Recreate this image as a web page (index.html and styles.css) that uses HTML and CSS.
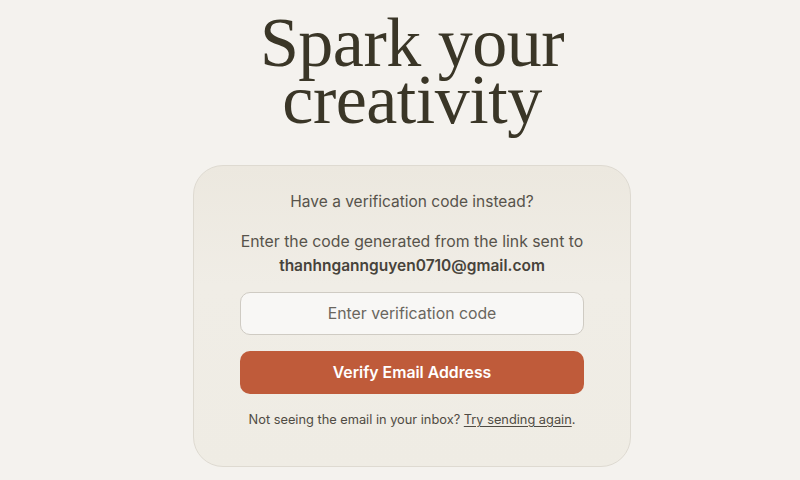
FILE: index.html
```html
<!DOCTYPE html>
<html>
<head>
<meta charset="utf-8">
<link rel="stylesheet" href="styles.css">
</head>
<body>
<main class="page">
  <h1 class="title"><span class="line">Spark your</span><span class="line">creativity</span></h1>
  <section class="card">
    <p class="lead">Have a verification code instead?</p>
    <p class="info">Enter the code generated from the link sent to<br><strong>thanhngannguyen0710@gmail.com</strong></p>
    <input class="code" type="text" placeholder="Enter verification code">
    <button class="verify">Verify Email Address</button>
    <p class="resend">Not seeing the email in your inbox? <a href="#">Try sending again</a>.</p>
  </section>
</main>
</body>
</html>
```
FILE: styles.css
```css
html, body {
  margin: 0;
  padding: 0;
  background: #f4f2ee;
}
body {
  width: 800px;
  height: 480px;
  overflow: hidden;
  font-family: Inter, "Noto Sans", sans-serif;
  color: #57534b;
}
.page {
  display: flex;
  flex-direction: column;
  align-items: center;
  padding-left: 24px;
}
.title {
  margin: 14px 0 0 0;
  font-family: "Liberation Serif", "DejaVu Serif", serif;
  font-weight: 400;
  font-size: 70px;
  letter-spacing: -0.5px;
  text-align: center;
  color: #3a3627;
  display: flex;
  flex-direction: column;
  align-items: center;
}
.line {
  display: block;
  line-height: 57px;
}
.card {
  margin-top: 37px;
  width: 438px;
  box-sizing: border-box;
  padding: 24px 46px 36px;
  border: 1px solid #dedad1;
  border-radius: 30px;
  background: linear-gradient(180deg, #ece8df 0%, #f0ede6 40%, #efece4 100%);
  display: flex;
  flex-direction: column;
  align-items: stretch;
  text-align: center;
}
.lead {
  margin: 0;
  font-size: 15.5px;
  line-height: 24px;
}
.info {
  margin: 16px 0 0;
  font-size: 15.8px;
  line-height: 24px;
  white-space: nowrap;
}
.info strong {
  font-size: 15.5px;
  font-weight: 600;
  color: #47433b;
}
.code {
  margin-top: 14px;
  height: 43px;
  box-sizing: border-box;
  border: 1px solid #cfcbc3;
  border-radius: 10px;
  background: #f8f7f5;
  font-family: inherit;
  font-size: 15.8px;
  text-align: center;
  color: #3a3627;
  outline: none;
}
.code::placeholder {
  color: #6a665e;
}
.verify {
  margin-top: 16px;
  height: 43px;
  border: none;
  border-radius: 10px;
  background: #bf5b3a;
  color: #fff;
  font-family: inherit;
  font-size: 15.8px;
  font-weight: 600;
}
.resend {
  margin: 16px 0 0;
  font-size: 12.8px;
  line-height: 20px;
  color: #4f4b43;
}
.resend a {
  color: #4f4b43;
  text-decoration: underline;
  text-underline-offset: 2px;
}
```
